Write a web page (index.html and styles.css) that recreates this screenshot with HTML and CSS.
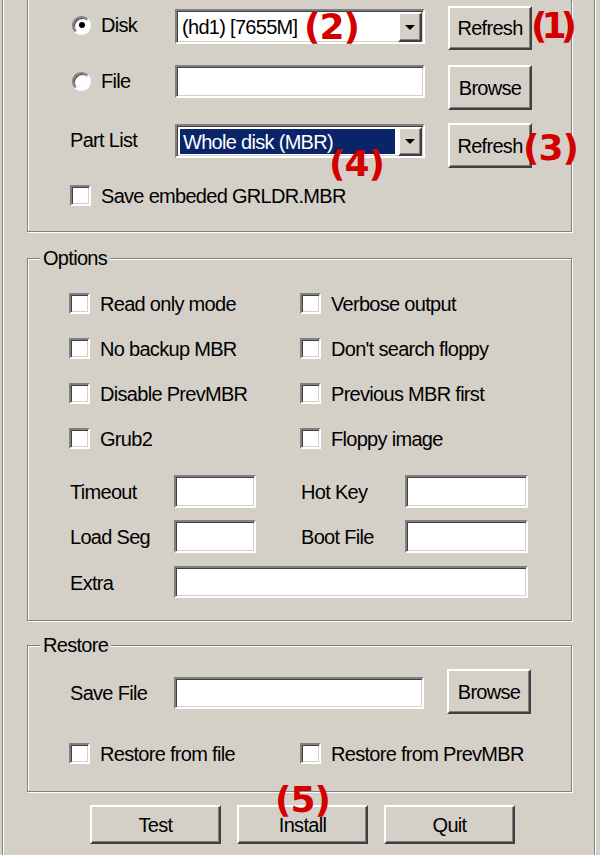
FILE: index.html
```html
<!DOCTYPE html>
<html lang="en">
<head>
<meta charset="utf-8">
<title>Grub4Dos Installer</title>
<link rel="stylesheet" href="styles.css">
</head>
<body>
<div class="frame">
  <section class="group group-disk">
    <div class="grid-disk">
      <div class="choice c-top"><span class="radio on"></span><span>Disk</span></div>
      <div class="field combo c-combo1"><span class="combo-text">(hd1) [7655M]</span><span class="drop"><span class="tri"></span></span></div>
      <div class="btn b-refresh1">Refresh</div>

      <div class="choice c-top"><span class="radio"></span><span>File</span></div>
      <div class="field c-input2"></div>
      <div class="btn b-browse">Browse</div>

      <div class="lbl c-part">Part List</div>
      <div class="field combo c-combo3"><span class="combo-text sel">Whole disk (MBR)</span><span class="drop"><span class="tri"></span></span></div>
      <div class="btn b-refresh3">Refresh</div>

      <div class="check c-save"><span class="box"></span><span>Save embeded GRLDR.MBR</span></div>
    </div>
  </section>

  <section class="group group-options">
    <div class="legend">Options</div>
    <div class="checks">
      <div class="check"><span class="box"></span><span>Read only mode</span></div>
      <div class="check"><span class="box"></span><span>Verbose output</span></div>
      <div class="check"><span class="box"></span><span>No backup MBR</span></div>
      <div class="check"><span class="box"></span><span>Don't search floppy</span></div>
      <div class="check"><span class="box"></span><span>Disable PrevMBR</span></div>
      <div class="check"><span class="box"></span><span>Previous MBR first</span></div>
      <div class="check"><span class="box"></span><span>Grub2</span></div>
      <div class="check"><span class="box"></span><span>Floppy image</span></div>
    </div>
    <div class="fields">
      <div class="lbl">Timeout</div>
      <div class="field f-small"></div>
      <div></div>
      <div class="lbl">Hot Key</div>
      <div class="field f-small"></div>

      <div class="lbl">Load Seg</div>
      <div class="field f-small"></div>
      <div></div>
      <div class="lbl">Boot File</div>
      <div class="field f-small"></div>

      <div class="lbl">Extra</div>
      <div class="field f-extra"></div>
    </div>
  </section>

  <section class="group group-restore">
    <div class="legend">Restore</div>
    <div class="save-row">
      <div class="lbl">Save File</div>
      <div class="field s-input"></div>
      <div class="btn s-btn">Browse</div>
    </div>
    <div class="checks restore-checks">
      <div class="check"><span class="box"></span><span>Restore from file</span></div>
      <div class="check"><span class="box"></span><span>Restore from PrevMBR</span></div>
    </div>
  </section>

  <div class="actions">
    <div class="btn act">Test</div>
    <div class="btn act">Install</div>
    <div class="btn act">Quit</div>
  </div>
</div>

<span class="note n1">(1)</span>
<span class="note n2">(2)</span>
<span class="note n3">(3)</span>
<span class="note n4">(4)</span>
<span class="note n5">(5)</span>
</body>
</html>
```

FILE: styles.css
```css
* { box-sizing: border-box; }

body {
  margin: 0;
  width: 600px;
  height: 855px;
  overflow: hidden;
  position: relative;
  background: #d4d0c8;
  color: #000;
  font-family: "Liberation Sans", Arial, sans-serif;
  font-size: 20px;
  line-height: 20px;
  letter-spacing: -0.7px;
}

.frame {
  margin-left: 2px;
  width: 593px;
  height: 855px;
  padding-left: 24px;
  border-left: 1px solid #808080;
  border-right: 1px solid #808080;
  box-shadow: inset 1px 0 0 #fff, 1px 0 0 #fff;
}

.group {
  width: 545px;
  border: 1px solid #808080;
  box-shadow: inset 1px 1px 0 #fff, 1px 1px 0 #fff;
}

.group-disk {
  border-top: none;
  height: 232px;
  box-shadow: inset 1px 0 0 #fff, 1px 1px 0 #fff;
}

.legend {
  width: fit-content;
  height: 20px;
  margin: -11px 0 0 -29px;
  padding: 0 3px;
  background: #d4d0c8;
}

/* ---- common controls ---- */
.field {
  background: #fff;
  border: 2px solid;
  border-color: #808080 #fff #fff #808080;
  box-shadow: inset 1px 1px 0 #404040, inset -1px -1px 0 #d4d0c8;
}

.btn {
  display: flex;
  align-items: center;
  justify-content: center;
  background: #d4d0c8;
  border: 2px solid;
  border-color: #fff #404040 #404040 #fff;
  box-shadow: inset -1px -1px 0 #808080;
}

.lbl {
  height: 20px;
  display: flex;
  align-items: center;
}

.choice, .check {
  display: flex;
  align-items: center;
  gap: 10px;
  white-space: nowrap;
}

.radio {
  width: 19px;
  height: 19px;
  margin-left: 2px;
  flex: none;
  border-radius: 50%;
  background: #fff;
  border: 2px solid;
  border-color: #808080 #fff #fff #808080;
  box-shadow: inset 1px 1px 0 #404040;
  display: flex;
  align-items: center;
  justify-content: center;
}
.radio.on::after {
  content: "";
  width: 6px;
  height: 6px;
  border-radius: 50%;
  background: #000;
}

.box {
  width: 21px;
  height: 21px;
  flex: none;
  background: #fff;
  border: 2px solid;
  border-color: #808080 #fff #fff #808080;
  box-shadow: inset 1px 1px 0 #404040, inset -1px -1px 0 #d4d0c8;
}

.combo {
  display: flex;
  align-items: stretch;
  padding: 2px 2px 1px 2px;
}
.combo-text {
  flex: 1;
  display: flex;
  align-items: center;
  padding-left: 3px;
  margin-right: 2px;
  white-space: nowrap;
}
.combo-text.sel {
  background: #0a246a;
  color: #fff;
}
.drop {
  width: 24px;
  flex: none;
  display: flex;
  align-items: center;
  justify-content: center;
  background: #d4d0c8;
  border: 2px solid;
  border-color: #fff #404040 #404040 #fff;
  box-shadow: inset -1px -1px 0 #808080;
  margin: -1px -1px -1px 0;
}
.tri {
  width: 0;
  height: 0;
  border-left: 5px solid transparent;
  border-right: 5px solid transparent;
  border-top: 5px solid #000;
}

/* ---- disk group ---- */
.grid-disk {
  display: grid;
  grid-template-columns: 105px 273px 84px;
  grid-template-rows: 56px 56px 65px 54px;
  align-items: start;
  padding-left: 42px;
}
.grid-disk .field { width: 250px; }
.c-top { margin-top: 15px; height: 20px; }
.c-combo1 { margin-top: 9px; height: 35px; }
.b-refresh1 { margin-top: 6px; height: 44px; }
.c-input2 { margin-top: 9px; height: 33px; }
.b-browse { margin-top: 9px; height: 45px; }
.c-part { margin-top: 18px; }
.c-combo3 { margin-top: 12px; height: 34px; }
.c-combo3 .combo-text { margin: 1px 3px 1px 1px; }
.b-refresh3 { margin-top: 11px; height: 45px; }
.c-save { grid-column: 1 / 4; margin-top: 8px; }

/* ---- options group ---- */
.group-options {
  margin-top: 26px;
  height: 363px;
  padding-left: 41px;
}
.checks {
  display: grid;
  grid-template-columns: 231px 1fr;
  grid-auto-rows: 45px;
  align-items: center;
  margin-top: 13px;
}
.fields {
  display: grid;
  grid-template-columns: 105px 82px 44px 105px 123px;
  grid-template-rows: 45px 46px 33px;
  align-items: start;
  margin-top: 14px;
}
.fields .lbl { margin-top: 7px; padding-left: 1px; }
.f-small { height: 33px; }
.f-extra { grid-column: 2 / 6; height: 32px; }

/* ---- restore group ---- */
.group-restore {
  margin-top: 24px;
  height: 147px;
  padding-left: 41px;
}
.save-row {
  display: grid;
  grid-template-columns: 105px 273px 84px;
  align-items: start;
  margin-top: 14px;
}
.save-row .lbl { margin-top: 14px; padding-left: 1px; }
.s-input { margin-top: 8px; height: 32px; width: 250px; }
.s-btn { height: 45px; }
.restore-checks { margin-top: 17px; }

/* ---- bottom buttons ---- */
.actions {
  display: flex;
  gap: 16px;
  margin: 13px 0 0 63px;
}
.act { width: 131px; height: 39px; }

/* ---- red annotations ---- */
.note {
  position: absolute;
  font-family: "DejaVu Sans", sans-serif;
  font-weight: bold;
  font-size: 36px;
  line-height: 36px;
  letter-spacing: -1px;
  color: #d40000;
  white-space: nowrap;
}
.n1 { left: 531px; top: 8px; letter-spacing: -6px; }
.n2 { left: 304px; top: 9px; }
.n3 { left: 523px; top: 130px; }
.n4 { left: 329px; top: 146px; }
.n5 { left: 275px; top: 782px; }
```
